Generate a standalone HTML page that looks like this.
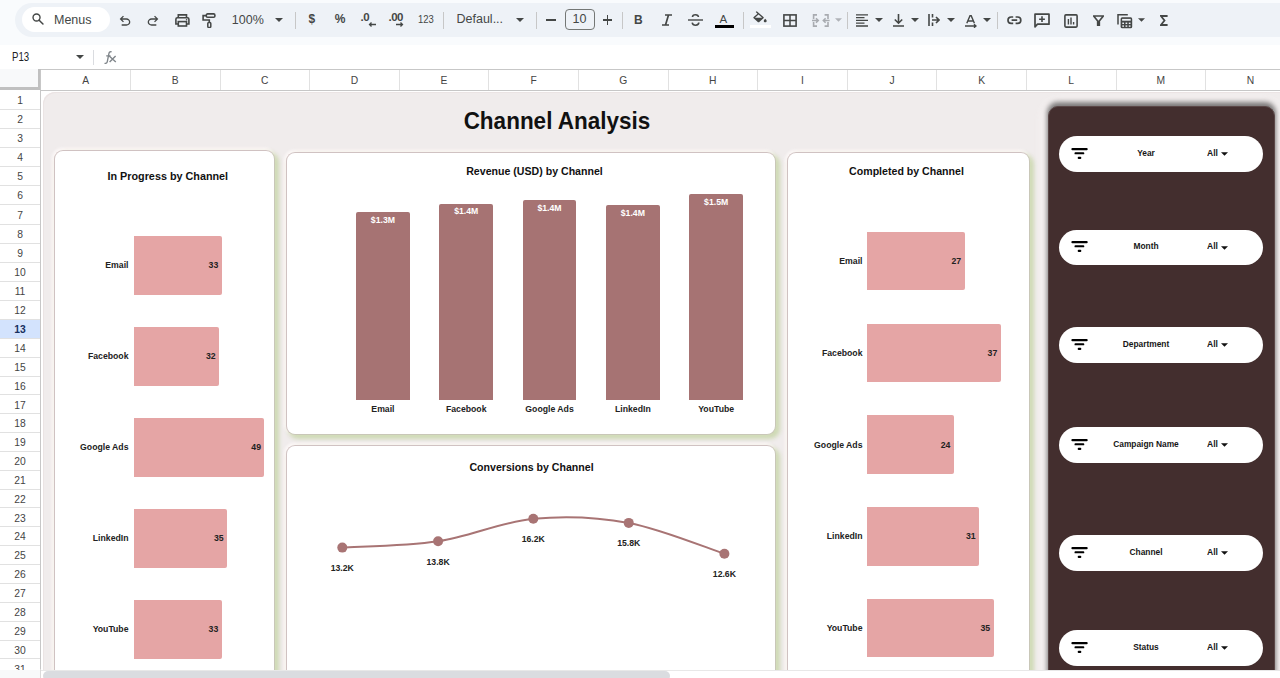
<!DOCTYPE html>
<html><head><meta charset="utf-8">
<style>
*{margin:0;padding:0;box-sizing:border-box}
html,body{width:1280px;height:678px;overflow:hidden;background:#fff;font-family:"Liberation Sans",sans-serif}
.a{position:absolute}
#top{left:0;top:0;width:1280px;height:45px;background:#f9fbfd}
#tb{left:15px;top:3.3px;width:1300px;height:33.6px;background:#eef2f7;border-radius:17px}
#menus{left:22px;top:7px;width:88px;height:25px;background:#fff;border-radius:13px}
.tt{color:#444746;font-size:13px;line-height:1}
.sep{width:1px;background:#c7c7c7;top:11.5px;height:17px}
#fbar{left:0;top:45px;width:1280px;height:24px;background:#fff}
#colhdr{left:0;top:68.7px;width:1280px;height:22px;background:#fff;border-top:1px solid #c7c7c7}
.ch{color:#444;font-size:10.3px;top:74.8px;text-align:center;width:89.6px}
.rh{color:#444;font-size:10.3px;left:0;width:40px;text-align:center}
.hl{left:0;width:40px;height:1px;background:#e1e1e1}
.vl{top:69.5px;width:1px;height:21px;background:#e1e1e1}
#grid{left:41px;top:90.5px;width:1239px;height:579px;background:#fff}
#dash{left:42.5px;top:92.3px;width:1260px;height:600px;background:#f0ecec;border-radius:12px 0 0 0;box-shadow:inset 1px 1px 0 #ebe4e4}
.card{background:#fff;border:1px solid #d0c2c2;border-right-color:#c9c7b8;border-bottom-color:#c9c7b8;border-radius:9px;box-shadow:3px 3px 4px 1px rgba(170,196,120,.48),-1px -1px 3px 1px rgba(255,250,250,.9)}
.title{font-weight:bold;color:#111;font-size:10.6px;text-align:center;white-space:nowrap}
.lab{font-weight:bold;color:#222;font-size:8.7px;white-space:nowrap}
.hbar{background:#e5a5a5;border-radius:0 2px 2px 0}
.vbar{background:#a67373;border-radius:2px 2px 0 0}
#panel{left:1048px;top:106px;width:227px;height:600px;background:#432e2e;border:1px solid #5a4646;border-radius:10px 10px 0 0;box-shadow:0 -2.5px 5px 1px rgba(0,0,0,.5),0 0 10px 6px rgba(255,250,250,.55)}
.pill{left:1059px;width:204px;height:35.5px;background:#fff;border-radius:18px}
.pt{font-weight:bold;color:#161616;font-size:9.3px;white-space:nowrap}
#bottom{left:0;top:669.5px;width:1280px;height:9px;background:#fff;border-top:1px solid #e8e8e8}
#thumb{left:43px;top:671px;width:627px;height:10px;background:#dadce0;border-radius:5px}
</style></head><body>
<div id="top" class="a"></div>
<div id="tb" class="a"></div>
<div id="fbar" class="a"></div>
<div id="menus" class="a"></div>
<!--TOP-->
<!-- toolbar content -->
<svg class="a" style="left:31px;top:12px" width="14" height="14" viewBox="0 0 24 24"><circle cx="9.5" cy="9.5" r="6" fill="none" stroke="#444746" stroke-width="2.4"/><path d="M14 14l6.5 6.5" stroke="#444746" stroke-width="2.6" stroke-linecap="round"/></svg>
<div class="a tt" style="left:54px;top:13.5px;font-size:12.5px">Menus</div>
<!-- undo -->
<svg class="a" style="left:117.4px;top:12.6px" width="16" height="16" viewBox="0 -960 960 960"><path fill="#444746" d="M280-200v-80h284q63 0 109.5-40T720-420q0-60-46.5-100T564-560H312l104 104-56 56-200-200 200-200 56 56-104 104h252q97 0 166.5 63T800-420q0 94-69.5 157T564-200H280Z"/></svg>
<svg class="a" style="left:145.3px;top:12.6px" width="16" height="16" viewBox="0 -960 960 960"><path fill="#444746" d="M396-200q-97 0-166.5-63T160-420q0-94 69.5-157T396-640h252L544-744l56-56 200 200-200 200-56-56 104-104H396q-63 0-109.5 40T240-420q0 60 46.5 100T396-280h284v80H396Z"/></svg>
<!-- print -->
<svg class="a" style="left:174.6px;top:14.2px" width="15" height="13" viewBox="0 0 15 13"><path d="M3.3 3.6V.9h8.2v2.7" fill="none" stroke="#444746" stroke-width="1.6"/><path d="M3.3 10H.9V5.2A1.5 1.5 0 0 1 2.4 3.7h10a1.5 1.5 0 0 1 1.5 1.5V10h-2.4" fill="none" stroke="#444746" stroke-width="1.6"/><rect x="3.3" y="7.6" width="8.2" height="4.4" fill="none" stroke="#444746" stroke-width="1.6"/><circle cx="11.6" cy="5.8" r=".8" fill="#444746"/></svg>
<!-- paint format -->
<svg class="a" style="left:202.3px;top:12.8px" width="14" height="15" viewBox="0 0 14 15"><rect x="4.3" y=".9" width="8.6" height="3.3" rx="1.3" fill="none" stroke="#444746" stroke-width="1.6"/><path d="M4.3 2.6H1.1v4.4h6.2v2.4" fill="none" stroke="#444746" stroke-width="1.6"/><rect x="5.8" y="9.4" width="3" height="5" rx="1" fill="none" stroke="#444746" stroke-width="1.5"/></svg>
<div class="a tt" style="left:231.8px;top:14.2px;font-size:12.5px">100%</div>
<svg class="a" style="left:275px;top:17.5px" width="8" height="4" viewBox="0 0 8 4"><path d="M0 0h8L4 4z" fill="#444746"/></svg>
<div class="a sep" style="left:295px"></div>
<div class="a" style="left:308.5px;top:11.5px;font-size:12px;font-weight:bold;color:#444746">$</div>
<div class="a" style="left:334.8px;top:11.6px;font-size:12px;font-weight:bold;color:#444746">%</div>
<div class="a" style="left:360.6px;top:11px;font-size:11.5px;font-weight:bold;color:#444746;letter-spacing:-.5px">.0</div>
<svg class="a" style="left:368px;top:22px" width="8" height="5" viewBox="0 0 8 5"><path d="M8 2.5H1.5M3.5 .5l-2 2 2 2" fill="none" stroke="#444746" stroke-width="1.3"/></svg>
<div class="a" style="left:388.6px;top:11px;font-size:11.5px;font-weight:bold;color:#444746;letter-spacing:-.6px">.00</div>
<svg class="a" style="left:396px;top:22px" width="8" height="5" viewBox="0 0 8 5"><path d="M0 2.5h6.5M4.5 .5l2 2-2 2" fill="none" stroke="#444746" stroke-width="1.3"/></svg>
<div class="a" style="left:417.6px;top:13.4px;font-size:10.5px;color:#444746;transform:scaleX(.9);transform-origin:0 0">123</div>
<div class="a sep" style="left:443px"></div>
<div class="a tt" style="left:456.5px;top:12.5px;font-size:12.5px">Defaul...</div>
<svg class="a" style="left:516px;top:17.5px" width="8" height="4" viewBox="0 0 8 4"><path d="M0 0h8L4 4z" fill="#444746"/></svg>
<div class="a sep" style="left:536px"></div>
<div class="a" style="left:545.5px;top:19.3px;width:10px;height:1.5px;background:#444746"></div>
<div class="a" style="left:564.5px;top:9px;width:30px;height:21px;border:1px solid #747775;border-radius:4px"></div>
<div class="a tt" style="left:572.5px;top:13px;font-size:12.5px">10</div>
<div class="a" style="left:602.5px;top:19.3px;width:9.5px;height:1.5px;background:#444746"></div>
<div class="a" style="left:606.5px;top:15px;width:1.5px;height:9.5px;background:#444746"></div>
<div class="a sep" style="left:622px"></div>
<div class="a" style="left:634px;top:13px;font-size:12px;font-weight:bold;color:#444746">B</div>
<svg class="a" style="left:661px;top:14px" width="12" height="12" viewBox="0 0 12 12"><path d="M4 1h7M1 11h7M7.5 1L4.5 11" fill="none" stroke="#444746" stroke-width="1.7"/></svg>
<svg class="a" style="left:688px;top:14px" width="15" height="12" viewBox="0 0 15 12"><path d="M0 6h15" stroke="#444746" stroke-width="1.4"/><path d="M10.5 3C10.3 1.4 9 .8 7.5.8 5.6.8 4.5 1.8 4.5 3M4.2 8.6c.3 1.7 1.6 2.6 3.4 2.6s3.2-.9 3.2-2.6" fill="none" stroke="#444746" stroke-width="1.6"/></svg>
<div class="a" style="left:719.5px;top:13px;font-size:11.5px;color:#444746">A</div>
<div class="a" style="left:714.5px;top:25px;width:19.5px;height:3px;background:#000"></div>
<div class="a sep" style="left:742.5px"></div>
<svg class="a" style="left:752px;top:10px" width="16" height="14" viewBox="0 -960 960 960" preserveAspectRatio="none"><path fill="#444746" d="M346-140 100-386q-10-10-15-22t-5-25q0-13 5-25t15-22l230-229-106-106 62-65 400 400q10 10 14.5 22t4.5 25q0 13-4.5 25T686-386L440-140q-10 10-22 15t-25 5q-13 0-25-5t-22-15Zm47-506L179-432h428L393-646Zm399 526q-36 0-61-25.5T706-208q0-27 13.5-51t30.5-47l42-54 44 54q16 23 30 47t14 51q0 37-26 62.5T792-120Z"/></svg>
<div class="a" style="left:750px;top:25px;width:21px;height:3px;background:#fff"></div>
<svg class="a" style="left:783px;top:14px" width="14" height="13" viewBox="0 0 14 13"><rect x=".9" y=".9" width="12.2" height="11.2" fill="none" stroke="#444746" stroke-width="1.6"/><path d="M7 1v11M1 6.5h12" stroke="#444746" stroke-width="1.5"/></svg>
<svg class="a" style="left:812.3px;top:13.6px" width="18" height="13" viewBox="0 0 18 13"><path d="M5 .9H1.6v4M1.6 8.1v4h3.4M12.6 .9H16v4M16 8.1v4h-3.4" fill="none" stroke="#a8abb0" stroke-width="1.6"/><path d="M0 6.5h6M4 4.3l2.3 2.2L4 8.7M17.6 6.5h-6M13.6 4.3l-2.3 2.2 2.3 2.2" fill="none" stroke="#a8abb0" stroke-width="1.5"/></svg>
<svg class="a" style="left:834.5px;top:18px" width="7" height="4" viewBox="0 0 8 4"><path d="M0 0h8L4 4z" fill="#b0b3b8"/></svg>
<div class="a sep" style="left:847px"></div>
<svg class="a" style="left:856px;top:14.3px" width="12.5" height="13" viewBox="0 0 12.5 13"><path d="M0 .8h12M0 3.6h8.5M0 6.4h12M0 9.2h8.5M0 12h12" stroke="#444746" stroke-width="1.3"/></svg>
<svg class="a" style="left:874.5px;top:18px" width="8" height="4" viewBox="0 0 8 4"><path d="M0 0h8L4 4z" fill="#444746"/></svg>
<svg class="a" style="left:892.5px;top:13.5px" width="11" height="13" viewBox="0 0 11 13"><path d="M5.5 0v9M1.8 5.5l3.7 3.7 3.7-3.7M0 12h11" fill="none" stroke="#444746" stroke-width="1.6"/></svg>
<svg class="a" style="left:911px;top:18px" width="8" height="4" viewBox="0 0 8 4"><path d="M0 0h8L4 4z" fill="#444746"/></svg>
<svg class="a" style="left:928px;top:14px" width="12" height="12" viewBox="0 0 12 12"><path d="M1 0v12M4.5 0v3.5M4.5 8.5V12M4 6h7M8 3l3 3-3 3" fill="none" stroke="#444746" stroke-width="1.6"/></svg>
<svg class="a" style="left:947px;top:18px" width="8" height="4" viewBox="0 0 8 4"><path d="M0 0h8L4 4z" fill="#444746"/></svg>
<svg class="a" style="left:965px;top:14.5px" width="12" height="13" viewBox="0 0 12 13"><path d="M1.8 8.2L5 .8h1.2l3.2 7.4M2.8 6h5.6M0 11h10.5M9 9.3l2 1.7-2 1.7" fill="none" stroke="#444746" stroke-width="1.4"/></svg>
<svg class="a" style="left:982.5px;top:18px" width="8" height="4" viewBox="0 0 8 4"><path d="M0 0h8L4 4z" fill="#444746"/></svg>
<div class="a sep" style="left:997px"></div>
<svg class="a" style="left:1007px;top:16.2px" width="15" height="8.5" viewBox="0 0 15 8.5"><path d="M6.2 1H4.2a3.2 3.2 0 0 0 0 6.4h2M8.6 1h2a3.2 3.2 0 0 1 0 6.4h-2M4.6 4.2h5.6" fill="none" stroke="#444746" stroke-width="1.7"/></svg>
<svg class="a" style="left:1034px;top:13px" width="16" height="15" viewBox="0 0 16 15"><path d="M1 13.8V1.2h14v10H3.5z" fill="none" stroke="#444746" stroke-width="1.7" stroke-linejoin="round"/><path d="M8 3.3v5.8M5.1 6.2h5.8" stroke="#444746" stroke-width="1.6"/></svg>
<svg class="a" style="left:1063.6px;top:13.6px" width="14" height="14" viewBox="0 0 14 14"><rect x=".9" y=".9" width="12.2" height="12.2" rx="1" fill="none" stroke="#444746" stroke-width="1.6"/><path d="M4.4 5v5.6M7 3.6v7M9.6 8v2.6" stroke="#444746" stroke-width="1.4"/></svg>
<svg class="a" style="left:1093.4px;top:15px" width="11" height="11" viewBox="0 0 11 11"><path d="M.6 1h9.8L6.3 6v4.6H4.7V6z" fill="none" stroke="#444746" stroke-width="1.7" stroke-linejoin="round"/></svg>
<svg class="a" style="left:1117px;top:13px" width="16" height="16" viewBox="0 0 16 16"><path d="M1 11.5V1.8h9.8" fill="none" stroke="#444746" stroke-width="1.5"/><rect x="3.6" y="4.3" width="11.6" height="11" rx="1.6" fill="#444746"/><rect x="5.1" y="5.9" width="8.6" height="1.8" fill="#eef2f7"/><g fill="#eef2f7"><rect x="5.3" y="9.6" width="1.7" height="1.4"/><rect x="8.55" y="9.6" width="1.7" height="1.4"/><rect x="11.8" y="9.6" width="1.7" height="1.4"/><rect x="5.3" y="12.4" width="1.7" height="1.4"/><rect x="8.55" y="12.4" width="1.7" height="1.4"/><rect x="11.8" y="12.4" width="1.7" height="1.4"/></g></svg>
<svg class="a" style="left:1138px;top:18px" width="7" height="4" viewBox="0 0 8 4"><path d="M0 0h8L4 4z" fill="#444746"/></svg>
<svg class="a" style="left:1159.6px;top:14.8px" width="8" height="11" viewBox="0 0 8 11"><path d="M7.6 1H.9l3.6 4.5L.9 10h6.7" fill="none" stroke="#444746" stroke-width="1.8"/></svg>

<!-- formula bar -->
<div class="a" style="left:12px;top:50px;font-size:12.2px;color:#202124;transform:scaleX(.79);transform-origin:0 0">P13</div>
<svg class="a" style="left:75.5px;top:55px" width="8" height="4" viewBox="0 0 8 4"><path d="M0 0h8L4 4z" fill="#444746"/></svg>
<div class="a" style="left:93px;top:49.5px;width:1px;height:15px;background:#dadce0"></div>
<svg class="a" style="left:103.5px;top:50.5px" width="14" height="14" viewBox="0 0 14 14"><path d="M7.6 .9C6.5.4 5.2.9 4.9 2.6L3.3 10.6C3 12.3 1.6 12.7.6 12.1M2.2 4.9h4.3" fill="none" stroke="#80868b" stroke-width="1.35"/><path d="M5.2 5l6.6 6M11.6 5l-6 6" fill="none" stroke="#80868b" stroke-width="1.4"/></svg>

<!--/TOP-->
<div id="colhdr" class="a"></div>
<!--HDR-->
<div class="a" style="left:0;top:69.3px;width:40.5px;height:21.2px;background:#f8f9fa;border-right:3px solid #c0c0c0;border-bottom:3px solid #c0c0c0"></div>
<div class="a ch" style="left:40.8px">A</div>
<div class="a ch" style="left:130.4px">B</div>
<div class="a vl" style="left:129.9px"></div>
<div class="a ch" style="left:220.0px">C</div>
<div class="a vl" style="left:219.5px"></div>
<div class="a ch" style="left:309.6px">D</div>
<div class="a vl" style="left:309.1px"></div>
<div class="a ch" style="left:399.2px">E</div>
<div class="a vl" style="left:398.7px"></div>
<div class="a ch" style="left:488.8px">F</div>
<div class="a vl" style="left:488.3px"></div>
<div class="a ch" style="left:578.4px">G</div>
<div class="a vl" style="left:577.9px"></div>
<div class="a ch" style="left:668.0px">H</div>
<div class="a vl" style="left:667.5px"></div>
<div class="a ch" style="left:757.6px">I</div>
<div class="a vl" style="left:757.1px"></div>
<div class="a ch" style="left:847.2px">J</div>
<div class="a vl" style="left:846.7px"></div>
<div class="a ch" style="left:936.8px">K</div>
<div class="a vl" style="left:936.3px"></div>
<div class="a ch" style="left:1026.4px">L</div>
<div class="a vl" style="left:1025.9px"></div>
<div class="a ch" style="left:1116.0px">M</div>
<div class="a vl" style="left:1115.5px"></div>
<div class="a ch" style="left:1205.6px">N</div>
<div class="a vl" style="left:1205.1px"></div>
<div class="a" style="left:40px;top:90px;width:1240px;height:1px;background:#c7c7c7"></div>
<div class="a" style="left:40.2px;top:70px;width:1px;height:600px;background:#c7c7c7"></div>
<div class="a rh" style="top:95.2px">1</div>
<div class="a rh" style="top:114.4px">2</div>
<div class="a hl" style="top:109.1px"></div>
<div class="a rh" style="top:133.2px">3</div>
<div class="a hl" style="top:127.9px"></div>
<div class="a rh" style="top:152.0px">4</div>
<div class="a hl" style="top:146.7px"></div>
<div class="a rh" style="top:171.1px">5</div>
<div class="a hl" style="top:165.8px"></div>
<div class="a rh" style="top:190.4px">6</div>
<div class="a hl" style="top:185.1px"></div>
<div class="a rh" style="top:209.6px">7</div>
<div class="a hl" style="top:204.3px"></div>
<div class="a rh" style="top:229.0px">8</div>
<div class="a hl" style="top:223.7px"></div>
<div class="a rh" style="top:248.1px">9</div>
<div class="a hl" style="top:242.8px"></div>
<div class="a rh" style="top:267.2px">10</div>
<div class="a hl" style="top:261.9px"></div>
<div class="a rh" style="top:286.1px">11</div>
<div class="a hl" style="top:280.8px"></div>
<div class="a rh" style="top:305.2px">12</div>
<div class="a hl" style="top:299.9px"></div>
<div class="a" style="left:0;top:319.0px;width:40.2px;height:19.1px;background:#d3e3fd"></div>
<div class="a rh" style="top:323.8px;font-weight:bold;color:#172f5e">13</div>
<div class="a hl" style="top:318.5px"></div>
<div class="a rh" style="top:342.9px">14</div>
<div class="a hl" style="top:337.6px"></div>
<div class="a rh" style="top:362.0px">15</div>
<div class="a hl" style="top:356.7px"></div>
<div class="a rh" style="top:380.8px">16</div>
<div class="a hl" style="top:375.5px"></div>
<div class="a rh" style="top:399.6px">17</div>
<div class="a hl" style="top:394.3px"></div>
<div class="a rh" style="top:418.3px">18</div>
<div class="a hl" style="top:413.0px"></div>
<div class="a rh" style="top:437.3px">19</div>
<div class="a hl" style="top:432.0px"></div>
<div class="a rh" style="top:456.3px">20</div>
<div class="a hl" style="top:451.0px"></div>
<div class="a rh" style="top:475.2px">21</div>
<div class="a hl" style="top:469.9px"></div>
<div class="a rh" style="top:493.9px">22</div>
<div class="a hl" style="top:488.6px"></div>
<div class="a rh" style="top:512.6px">23</div>
<div class="a hl" style="top:507.3px"></div>
<div class="a rh" style="top:531.4px">24</div>
<div class="a hl" style="top:526.1px"></div>
<div class="a rh" style="top:550.2px">25</div>
<div class="a hl" style="top:544.9px"></div>
<div class="a rh" style="top:569.2px">26</div>
<div class="a hl" style="top:563.9px"></div>
<div class="a rh" style="top:588.1px">27</div>
<div class="a hl" style="top:582.8px"></div>
<div class="a rh" style="top:606.9px">28</div>
<div class="a hl" style="top:601.6px"></div>
<div class="a rh" style="top:625.9px">29</div>
<div class="a hl" style="top:620.6px"></div>
<div class="a rh" style="top:644.8px">30</div>
<div class="a hl" style="top:639.5px"></div>
<div class="a rh" style="top:663.5px">31</div>
<div class="a hl" style="top:658.2px"></div>
<!--/HDR-->
<div id="grid" class="a"></div>
<div id="dash" class="a"></div>

<!-- title -->
<div class="a" style="left:300px;top:108px;width:514px;text-align:center;font-weight:bold;font-size:22.5px;color:#111;transform:scaleY(1.04);transform-origin:0 0">Channel Analysis</div>

<!-- cards -->
<div class="a card" style="left:54.2px;top:150.4px;width:221px;height:560px"></div>
<div class="a card" style="left:285.5px;top:152px;width:490px;height:283px"></div>
<div class="a card" style="left:286.3px;top:444.9px;width:490px;height:300px"></div>
<div class="a card" style="left:786.5px;top:151.7px;width:243px;height:560px"></div>
<!--CHARTS-->
<div class="a hbar" style="left:133.7px;top:236.4px;width:88.1px;height:58.8px"></div>
<div class="a lab" style="left:0;width:128.5px;text-align:right;top:260.3px">Email</div>
<div class="a lab" style="left:133.7px;width:84.6px;text-align:right;top:260.3px">33</div>
<div class="a hbar" style="left:133.7px;top:327.4px;width:85.4px;height:58.8px"></div>
<div class="a lab" style="left:0;width:128.5px;text-align:right;top:351.3px">Facebook</div>
<div class="a lab" style="left:133.7px;width:81.9px;text-align:right;top:351.3px">32</div>
<div class="a hbar" style="left:133.7px;top:418.4px;width:130.8px;height:58.8px"></div>
<div class="a lab" style="left:0;width:128.5px;text-align:right;top:442.3px">Google Ads</div>
<div class="a lab" style="left:133.7px;width:127.3px;text-align:right;top:442.3px">49</div>
<div class="a hbar" style="left:133.7px;top:509.4px;width:93.5px;height:58.8px"></div>
<div class="a lab" style="left:0;width:128.5px;text-align:right;top:533.3px">LinkedIn</div>
<div class="a lab" style="left:133.7px;width:90.0px;text-align:right;top:533.3px">35</div>
<div class="a hbar" style="left:133.7px;top:600.4px;width:88.1px;height:58.8px"></div>
<div class="a lab" style="left:0;width:128.5px;text-align:right;top:624.3px">YouTube</div>
<div class="a lab" style="left:133.7px;width:84.6px;text-align:right;top:624.3px">33</div>
<div class="a title" style="left:56.3px;width:223px;top:169.5px;font-size:10.8px">In Progress by Channel</div>
<div class="a hbar" style="left:867.4px;top:231.8px;width:97.3px;height:58.6px"></div>
<div class="a lab" style="left:700px;width:162.5px;text-align:right;top:256.1px">Email</div>
<div class="a lab" style="left:867.4px;width:93.8px;text-align:right;top:256.1px">27</div>
<div class="a hbar" style="left:867.4px;top:323.6px;width:133.4px;height:58.6px"></div>
<div class="a lab" style="left:700px;width:162.5px;text-align:right;top:347.9px">Facebook</div>
<div class="a lab" style="left:867.4px;width:129.9px;text-align:right;top:347.9px">37</div>
<div class="a hbar" style="left:867.4px;top:415.3px;width:86.5px;height:58.6px"></div>
<div class="a lab" style="left:700px;width:162.5px;text-align:right;top:439.6px">Google Ads</div>
<div class="a lab" style="left:867.4px;width:83.0px;text-align:right;top:439.6px">24</div>
<div class="a hbar" style="left:867.4px;top:507.1px;width:111.8px;height:58.6px"></div>
<div class="a lab" style="left:700px;width:162.5px;text-align:right;top:531.4px">LinkedIn</div>
<div class="a lab" style="left:867.4px;width:108.3px;text-align:right;top:531.4px">31</div>
<div class="a hbar" style="left:867.4px;top:598.8px;width:126.2px;height:58.6px"></div>
<div class="a lab" style="left:700px;width:162.5px;text-align:right;top:623.1px">YouTube</div>
<div class="a lab" style="left:867.4px;width:122.7px;text-align:right;top:623.1px">35</div>
<div class="a title" style="left:786.5px;width:240px;top:165px">Completed by Channel</div>
<div class="a vbar" style="left:356.1px;top:212.3px;width:53.7px;height:187.4px"></div>
<div class="a lab" style="left:336.1px;width:93.7px;text-align:center;top:215.0px;color:#fff">$1.3M</div>
<div class="a lab" style="left:336.1px;width:93.7px;text-align:center;top:403.6px">Email</div>
<div class="a vbar" style="left:439.4px;top:203.6px;width:53.7px;height:196.2px"></div>
<div class="a lab" style="left:419.4px;width:93.7px;text-align:center;top:206.3px;color:#fff">$1.4M</div>
<div class="a lab" style="left:419.4px;width:93.7px;text-align:center;top:403.6px">Facebook</div>
<div class="a vbar" style="left:522.7px;top:199.9px;width:53.7px;height:199.8px"></div>
<div class="a lab" style="left:502.7px;width:93.7px;text-align:center;top:202.6px;color:#fff">$1.4M</div>
<div class="a lab" style="left:502.7px;width:93.7px;text-align:center;top:403.6px">Google Ads</div>
<div class="a vbar" style="left:606.0px;top:205.4px;width:53.7px;height:194.3px"></div>
<div class="a lab" style="left:586.0px;width:93.7px;text-align:center;top:208.1px;color:#fff">$1.4M</div>
<div class="a lab" style="left:586.0px;width:93.7px;text-align:center;top:403.6px">LinkedIn</div>
<div class="a vbar" style="left:689.3px;top:193.8px;width:53.7px;height:205.9px"></div>
<div class="a lab" style="left:669.3px;width:93.7px;text-align:center;top:196.5px;color:#fff">$1.5M</div>
<div class="a lab" style="left:669.3px;width:93.7px;text-align:center;top:403.6px">YouTube</div>
<div class="a title" style="left:285.5px;width:498px;top:165px">Revenue (USD) by Channel</div>
<svg class="a" style="left:0;top:0" width="1280" height="678"><path d="M342.30 547.60 C358.27 546.55 406.27 546.10 438.10 541.30 C469.93 536.50 501.52 521.87 533.30 518.80 C565.07 515.73 596.90 517.07 628.75 522.90 C660.60 528.73 708.46 548.65 724.40 553.80" fill="none" stroke="#a87474" stroke-width="2"/><circle cx="342.3" cy="547.6" r="5" fill="#a87474"/><circle cx="438.1" cy="541.3" r="5" fill="#a87474"/><circle cx="533.3" cy="518.8" r="5" fill="#a87474"/><circle cx="628.75" cy="522.9" r="5" fill="#a87474"/><circle cx="724.4" cy="553.8" r="5" fill="#a87474"/></svg>
<div class="a lab" style="left:312.3px;width:60px;text-align:center;top:563.1px">13.2K</div>
<div class="a lab" style="left:408.1px;width:60px;text-align:center;top:556.8px">13.8K</div>
<div class="a lab" style="left:503.3px;width:60px;text-align:center;top:534.3px">16.2K</div>
<div class="a lab" style="left:598.8px;width:60px;text-align:center;top:538.4px">15.8K</div>
<div class="a lab" style="left:694.4px;width:60px;text-align:center;top:569.3px">12.6K</div>
<div class="a title" style="left:286.5px;width:490px;top:461px">Conversions by Channel</div>
<!--/CHARTS-->

<div id="panel" class="a"></div>
<!--PANEL-->
<div class="a pill" style="top:136.0px"></div>
<svg class="a" style="left:1070.5px;top:146.5px" width="18" height="13" viewBox="0 0 18 13"><rect x=".4" y=".95" width="16.3" height="2.3" rx="1" fill="#000"/><rect x="3.5" y="5.35" width="9.8" height="2" rx=".9" fill="#000"/><rect x="6.7" y="9.8" width="3.6" height="2.1" rx="1" fill="#000"/></svg>
<div class="a pt" style="left:1095px;width:102px;text-align:center;top:147.6px;transform:scaleX(.9)">Year</div>
<div class="a pt" style="left:1207px;top:147.6px;transform:scaleX(.92);transform-origin:0 0">All</div>
<svg class="a" style="left:1221.3px;top:151.8px" width="7" height="4" viewBox="0 0 8 4"><path d="M0 0h8L4 4z" fill="#111"/></svg>
<div class="a pill" style="top:229.7px"></div>
<svg class="a" style="left:1070.5px;top:240.2px" width="18" height="13" viewBox="0 0 18 13"><rect x=".4" y=".95" width="16.3" height="2.3" rx="1" fill="#000"/><rect x="3.5" y="5.35" width="9.8" height="2" rx=".9" fill="#000"/><rect x="6.7" y="9.8" width="3.6" height="2.1" rx="1" fill="#000"/></svg>
<div class="a pt" style="left:1095px;width:102px;text-align:center;top:241.3px;transform:scaleX(.9)">Month</div>
<div class="a pt" style="left:1207px;top:241.3px;transform:scaleX(.92);transform-origin:0 0">All</div>
<svg class="a" style="left:1221.3px;top:245.5px" width="7" height="4" viewBox="0 0 8 4"><path d="M0 0h8L4 4z" fill="#111"/></svg>
<div class="a pill" style="top:327.4px"></div>
<svg class="a" style="left:1070.5px;top:337.9px" width="18" height="13" viewBox="0 0 18 13"><rect x=".4" y=".95" width="16.3" height="2.3" rx="1" fill="#000"/><rect x="3.5" y="5.35" width="9.8" height="2" rx=".9" fill="#000"/><rect x="6.7" y="9.8" width="3.6" height="2.1" rx="1" fill="#000"/></svg>
<div class="a pt" style="left:1095px;width:102px;text-align:center;top:339.0px;transform:scaleX(.9)">Department</div>
<div class="a pt" style="left:1207px;top:339.0px;transform:scaleX(.92);transform-origin:0 0">All</div>
<svg class="a" style="left:1221.3px;top:343.2px" width="7" height="4" viewBox="0 0 8 4"><path d="M0 0h8L4 4z" fill="#111"/></svg>
<div class="a pill" style="top:427.0px"></div>
<svg class="a" style="left:1070.5px;top:437.5px" width="18" height="13" viewBox="0 0 18 13"><rect x=".4" y=".95" width="16.3" height="2.3" rx="1" fill="#000"/><rect x="3.5" y="5.35" width="9.8" height="2" rx=".9" fill="#000"/><rect x="6.7" y="9.8" width="3.6" height="2.1" rx="1" fill="#000"/></svg>
<div class="a pt" style="left:1095px;width:102px;text-align:center;top:438.6px;transform:scaleX(.9)">Campaign Name</div>
<div class="a pt" style="left:1207px;top:438.6px;transform:scaleX(.92);transform-origin:0 0">All</div>
<svg class="a" style="left:1221.3px;top:442.8px" width="7" height="4" viewBox="0 0 8 4"><path d="M0 0h8L4 4z" fill="#111"/></svg>
<div class="a pill" style="top:535.3px"></div>
<svg class="a" style="left:1070.5px;top:545.8px" width="18" height="13" viewBox="0 0 18 13"><rect x=".4" y=".95" width="16.3" height="2.3" rx="1" fill="#000"/><rect x="3.5" y="5.35" width="9.8" height="2" rx=".9" fill="#000"/><rect x="6.7" y="9.8" width="3.6" height="2.1" rx="1" fill="#000"/></svg>
<div class="a pt" style="left:1095px;width:102px;text-align:center;top:546.9px;transform:scaleX(.9)">Channel</div>
<div class="a pt" style="left:1207px;top:546.9px;transform:scaleX(.92);transform-origin:0 0">All</div>
<svg class="a" style="left:1221.3px;top:551.1px" width="7" height="4" viewBox="0 0 8 4"><path d="M0 0h8L4 4z" fill="#111"/></svg>
<div class="a pill" style="top:630.2px"></div>
<svg class="a" style="left:1070.5px;top:640.7px" width="18" height="13" viewBox="0 0 18 13"><rect x=".4" y=".95" width="16.3" height="2.3" rx="1" fill="#000"/><rect x="3.5" y="5.35" width="9.8" height="2" rx=".9" fill="#000"/><rect x="6.7" y="9.8" width="3.6" height="2.1" rx="1" fill="#000"/></svg>
<div class="a pt" style="left:1095px;width:102px;text-align:center;top:641.8px;transform:scaleX(.9)">Status</div>
<div class="a pt" style="left:1207px;top:641.8px;transform:scaleX(.92);transform-origin:0 0">All</div>
<svg class="a" style="left:1221.3px;top:646.0px" width="7" height="4" viewBox="0 0 8 4"><path d="M0 0h8L4 4z" fill="#111"/></svg>
<!--/PANEL-->
<div id="bottom" class="a"></div>
<div class="a" style="left:0;top:670px;width:40.5px;height:8px;background:#f8f9fa"></div>
<div class="a" style="left:40.2px;top:669px;width:1px;height:9px;background:#dadada"></div>
<div id="thumb" class="a"></div>
</body></html>
